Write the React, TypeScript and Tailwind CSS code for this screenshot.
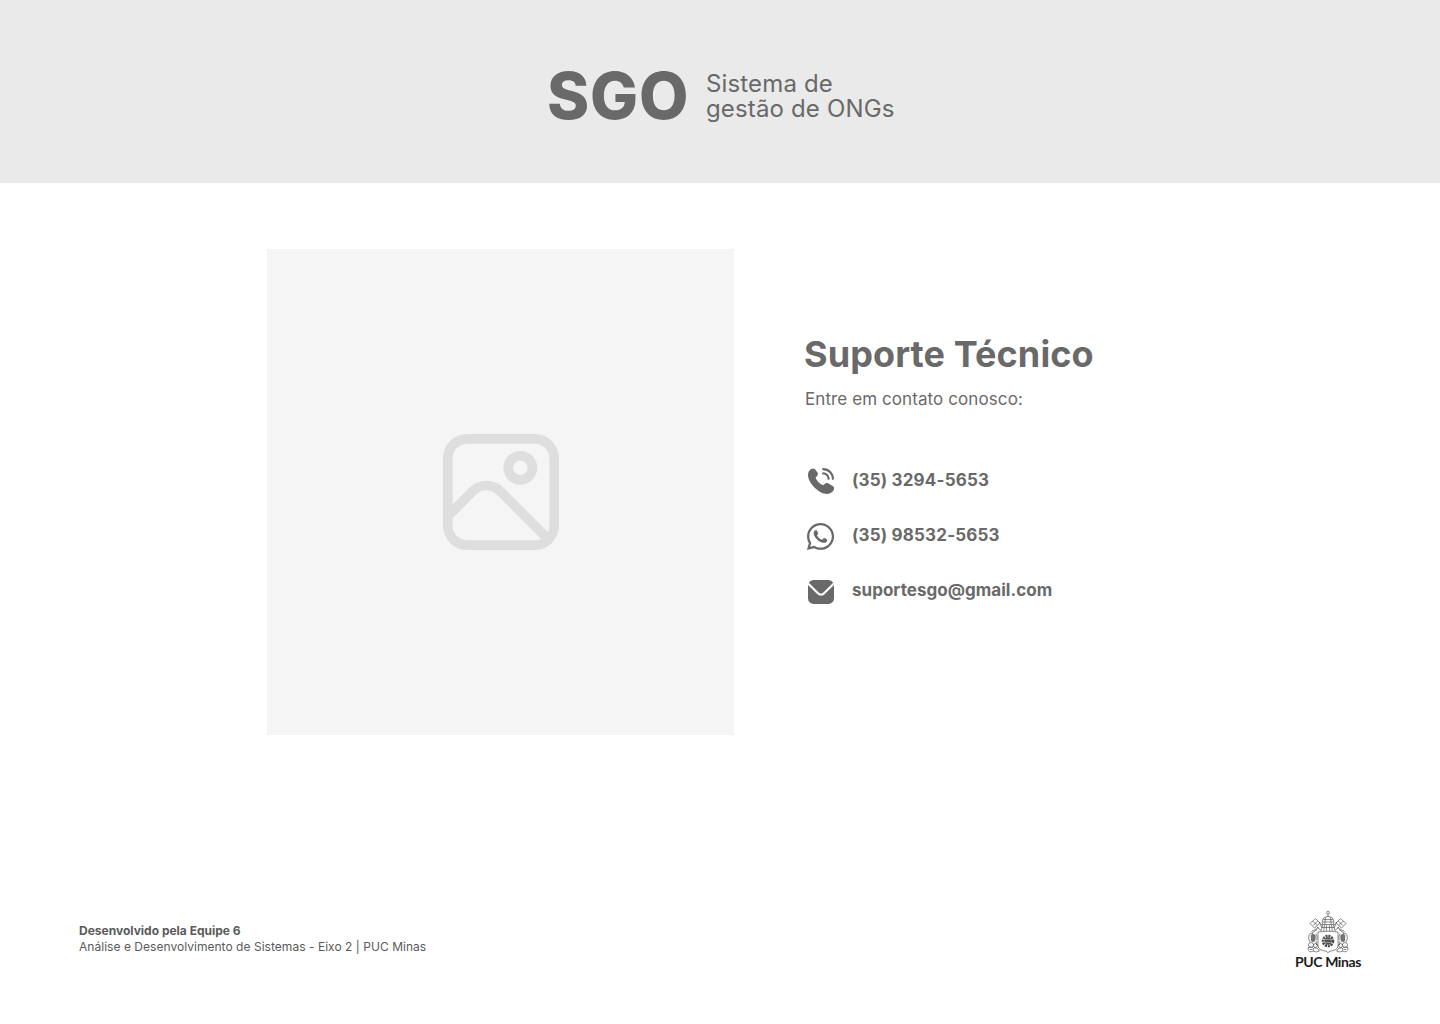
import { FaWhatsapp } from "react-icons/fa";

function PictureIcon() {
  return (
    <svg viewBox="0 0 24 24" className="size-[116px] fill-[#dedede]">
      <path d="M19,0H5A5.006,5.006,0,0,0,0,5V19a5.006,5.006,0,0,0,5,5H19a5.006,5.006,0,0,0,5-5V5A5.006,5.006,0,0,0,19,0ZM5,2H19a3,3,0,0,1,3,3V19a2.951,2.951,0,0,1-.3,1.285l-9.163-9.163a5,5,0,0,0-7.072,0L2,14.586V5A3,3,0,0,1,5,2ZM5,22a3,3,0,0,1-3-3V17.414l4.878-4.878a3,3,0,0,1,4.244,0l9.163,9.163A2.951,2.951,0,0,1,19,22Z" />
      <path d="M16,10.5A3.5,3.5,0,1,0,12.5,7,3.5,3.5,0,0,0,16,10.5Zm0-5A1.5,1.5,0,1,1,14.5,7,1.5,1.5,0,0,1,16,5.5Z" />
    </svg>
  );
}

function PhoneIcon() {
  return (
    <svg viewBox="0 0 24 24" className="mb-[2px] size-[26px] fill-current">
      <path d="M13,1a1,1,0,0,1,1-1A10.011,10.011,0,0,1,24,10a1,1,0,0,1-2,0,8.009,8.009,0,0,0-8-8A1,1,0,0,1,13,1Zm1,5a4,4,0,0,1,4,4,1,1,0,0,0,2,0,6.006,6.006,0,0,0-6-6,1,1,0,0,0,0,2Zm9.093,10.739a3.1,3.1,0,0,1,0,4.378l-.91,1.049c-8.19,7.841-28.12-12.084-20.4-20.3l1.15-1A3.081,3.081,0,0,1,6.26.906c.031.031,1.884,2.438,1.884,2.438a3.1,3.1,0,0,1-.007,4.282L6.979,9.082a12.781,12.781,0,0,0,6.931,6.945l1.465-1.165a3.1,3.1,0,0,1,4.281-.006S23.062,16.708,23.093,16.739Z" />
    </svg>
  );
}

function EnvelopeIcon() {
  return (
    <svg viewBox="0 0 24 24" className="size-[26px] fill-current">
      <path d="M23.954,5.542,15.536,13.96a5.007,5.007,0,0,1-7.072,0L.046,5.542C.032,5.7,0,5.843,0,6V18a5.006,5.006,0,0,0,5,5H19a5.006,5.006,0,0,0,5-5V6C24,5.843,23.968,5.7,23.954,5.542Z" />
      <path d="M14.122,12.546l9.134-9.135A4.986,4.986,0,0,0,19,1H5A4.986,4.986,0,0,0,.744,3.411l9.134,9.135A3.007,3.007,0,0,0,14.122,12.546Z" />
    </svg>
  );
}

function CrestSide() {
  return (
    <g>
      {/* crossed key */}
      <path d="M3 12.5 L8.5 7.5 L13 12 L7.5 17 Z M5.7 10 L10.2 14.5 M6.3 14.5 L10.5 10 M12 11 L16 15 M9.5 15.5 L14 19.5 M12 16.5 L4.5 20.5 M10 18.5 L5 22 M13 13 L15 17" />
      {/* angel */}
      <path d="M4.2 24 Q6.5 22.5 8.2 24.5 L8 29.5 Q6.5 31.5 4.5 30 Z" className="fill-[#777]" />
      <path d="M6 22.5 Q3 21 2 24 Q0.8 28 3 31 M8.8 22.5 Q10.8 25 9.8 29 M9.5 30 Q8 33 10.5 35" />
      <circle cx="4" cy="34" r="2.5" />
      <circle cx="8.5" cy="34.5" r="2" />
      <path d="M1.2 36.5 Q0.4 40.5 4 40.8 Q7.4 40.5 6.4 37 Q4 35 1.2 36.5 M7 37 Q10.5 35.5 12.5 40 Q9 42 6 40 M2.8 38.5 H5.5" />
    </g>
  );
}

function Crest() {
  return (
    <svg viewBox="0 0 42 42" className="mt-px h-[42px] w-[42px] fill-none stroke-[#4a4a4a] stroke-[0.65]">
      <CrestSide />
      <g transform="translate(42 0) scale(-1 1)">
        <CrestSide />
      </g>
      {/* tiara */}
      <circle cx="21" cy="1.8" r="1.4" />
      <path d="M21 3.2 V5.5 M15.5 13.5 Q14 8 18.5 6 Q21 4.6 23.5 6 Q28 8 26.5 13.5 M16 8.6 H26 M15 11 H27 M15.3 13.5 H26.7 M18.5 6.2 L17.8 13.5 M23.5 6.2 L24.2 13.5" />
      <path d="M15.5 14 L14 20 M26.5 14 L28 20 M17.5 14 L16.7 20 M24.5 14 L25.3 20 M19.6 14 L19.3 20 M22.4 14 L22.7 20 M15 16.5 H27" />
      {/* shield */}
      <path d="M11 21 Q21 19.4 31 21 V34 Q31 38.5 26 39.5 Q22.5 40 21 41.6 Q19.5 40 16 39.5 Q11 38.5 11 34 Z" className="fill-white" />
      <circle cx="21" cy="30" r="4.8" className="fill-none stroke-[#4a4a4a] stroke-[3] [stroke-dasharray:2_0.8]" />
      <circle cx="21" cy="30" r="3.4" className="fill-[#555] stroke-none" />
      <path d="M17 28.5 H25 M17 31.5 H25" className="stroke-[#bbb] stroke-[0.6]" />
    </svg>
  );
}

const contacts = [
  { text: "(35) 3294-5653", icon: <PhoneIcon />, tracking: "tracking-[0.18px]" },
  {
    text: "(35) 98532-5653",
    icon: <FaWhatsapp className="mr-px size-[31px] shrink-0" />,
    tracking: "tracking-[0.18px]",
  },
  { text: "suportesgo@gmail.com", icon: <EnvelopeIcon />, tracking: "tracking-[0.03px]" },
];

export default function App() {
  return (
    <div className="flex h-[1024px] w-[1440px] flex-col overflow-hidden bg-white font-['Inter',sans-serif] text-[#696969]">
      <header className="flex h-[183px] shrink-0 items-start bg-[#eaeaea] pl-[547px]">
        <h1 className="mt-[64px] w-[159px] text-[64px] leading-[64px] font-extrabold tracking-[0.8px]">SGO</h1>
        <p className="mt-[71px] text-[24px] leading-[25px] tracking-[0.15px] whitespace-nowrap">
          Sistema de
          <br />
          gestão de ONGs
        </p>
      </header>

      <main className="flex shrink-0 pt-[66px] pl-[267px]">
        <div className="flex h-[486px] w-[467px] items-center justify-center bg-[#f5f5f5]">
          <PictureIcon />
        </div>
        <section className="pt-[83px] pl-[70px]">
          <h2 className="text-[36px] leading-[44px] font-bold tracking-[0.1px]">Suporte Técnico</h2>
          <p className="mt-[11px] pl-px text-[17px] leading-6 tracking-[0.09px]">Entre em contato conosco:</p>
          <ul className="mt-[57px] flex flex-col gap-[31px]">
            {contacts.map((c) => (
              <li key={c.text} className="flex h-6 items-center">
                <span className="mt-[3px] ml-[2px] flex w-[30px] justify-center">{c.icon}</span>
                <span className={`ml-4 text-[17px] leading-6 font-bold ${c.tracking}`}>{c.text}</span>
              </li>
            ))}
          </ul>
        </section>
      </main>

      <footer className="mt-[175px] flex items-start justify-between pr-[78px] pl-[79px]">
        <div className="mt-[13px] text-[12px] leading-4 text-[#5a5a5a]">
          <p className="font-bold">Desenvolvido pela Equipe 6</p>
          <p className="tracking-[0.035px]">Análise e Desenvolvimento de Sistemas - Eixo 2 | PUC Minas</p>
        </div>
        <div className="flex w-[68px] flex-col items-center">
          <Crest />
          <span className="font-['Lato',sans-serif] text-[14px] leading-[18px] font-bold tracking-[-0.4px] whitespace-nowrap text-[#1c1c1c]">
            PUC Minas
          </span>
        </div>
      </footer>
    </div>
  );
}
